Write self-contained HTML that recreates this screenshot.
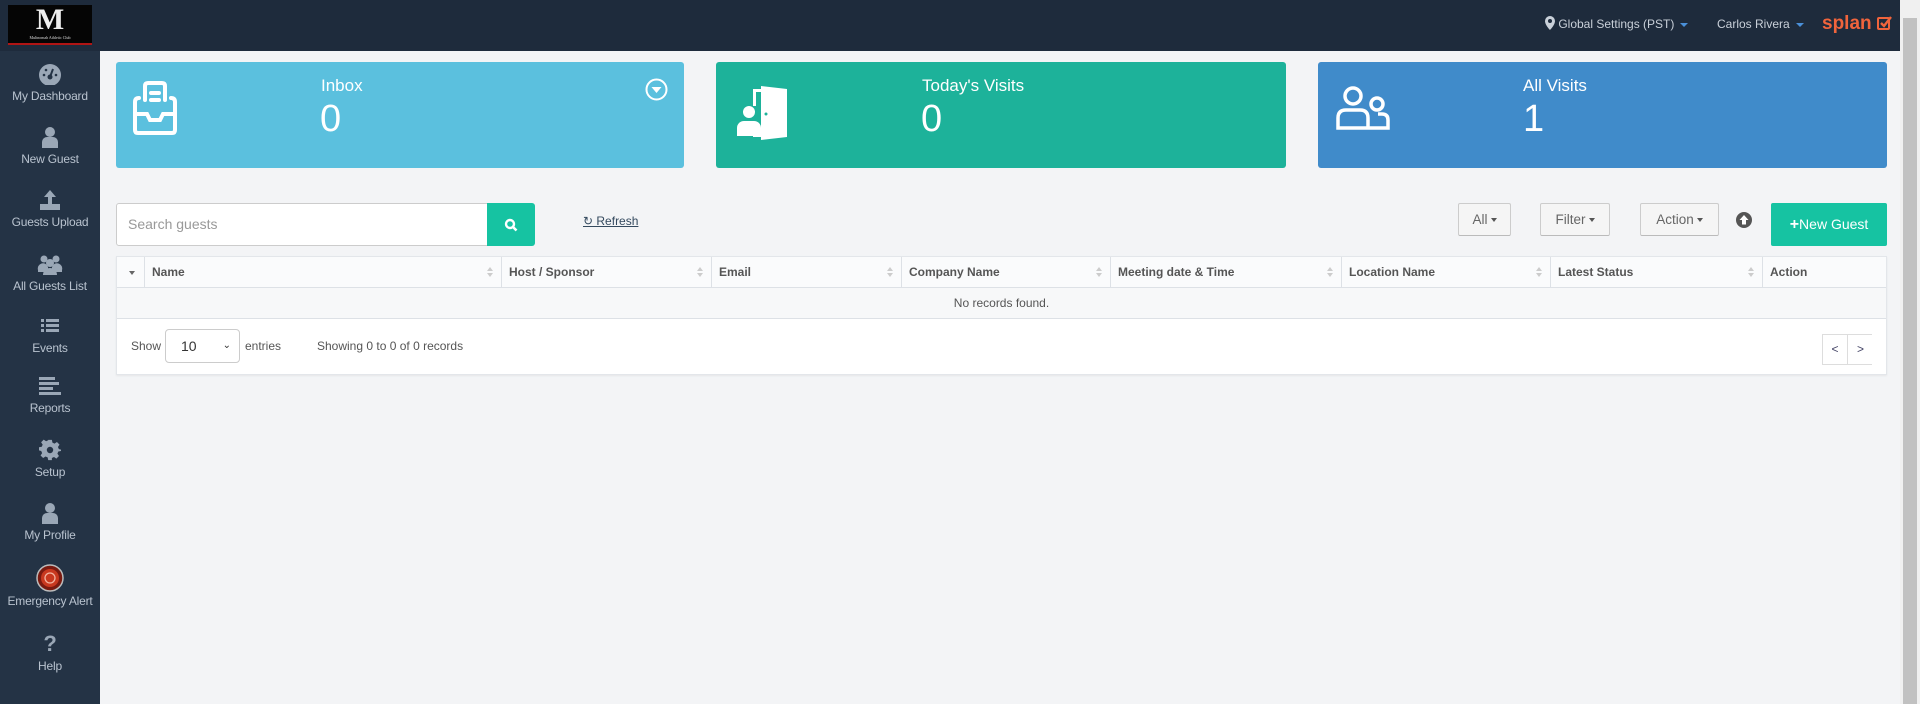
<!DOCTYPE html>
<html><head><meta charset="utf-8"><style>
*{box-sizing:border-box;margin:0;padding:0}
body{width:1920px;height:704px;overflow:hidden;background:#f3f4f6;font-family:"Liberation Sans",sans-serif;position:relative;color:#555}
.top{position:absolute;left:0;top:0;width:1900px;height:51px;background:#1e2b3c}
.logo{position:absolute;left:8px;top:5px;width:84px;height:40px;background:#050505;border-bottom:2px solid #b01515;color:#ddd;text-align:center;font-family:"Liberation Serif",serif}
.side{position:absolute;left:0;top:51px;width:100px;height:653px;background:#243345}
.si{position:absolute;left:0;width:100px;text-align:center;color:#b9c3cf;font-size:12px;letter-spacing:-0.2px}
.si .ic{display:block;margin:0 auto 4px;height:22px}
.tr{position:absolute;top:0;height:51px;line-height:49px;color:#c9d0d9;font-size:12px}
.car{display:inline-block;width:0;height:0;border-left:4px solid transparent;border-right:4px solid transparent;border-top:4px solid #4a90d9;vertical-align:middle;margin-left:6px}
.card{position:absolute;top:62px;height:106px;border-radius:3px;color:#fff}
.card .t{position:absolute;top:14px;font-size:17px}
.card .n{position:absolute;top:36px;font-size:38px}
.scroll{position:absolute;right:0;top:0;width:20px;height:704px;background:#f0f0f0}
.thumb{position:absolute;right:3px;top:18px;width:14px;height:686px;background:#c1c1c1}
.btn{position:absolute;top:203px;height:33px;border:1px solid #ccc;border-bottom-color:#bbb;background:#f5f5f5;font-size:13.5px;color:#666;line-height:31px;text-align:center;border-radius:2px}
.dc{display:inline-block;border-left:3.5px solid transparent;border-right:3.5px solid transparent;border-top:4px solid #555;vertical-align:middle;margin-left:3px}
.tbl{position:absolute;left:116px;top:256px;width:1771px;height:119px;background:#fff;border:1px solid #e3e6ea;box-shadow:0 1px 2px rgba(0,0,0,.06)}
.th{position:absolute;top:0;height:31px;border-left:1px solid #dde1e6;font-size:12px;font-weight:bold;color:#555;line-height:31px;padding-left:7px;background:#fafbfc;border-bottom:1px solid #dde1e6}
.th .s{position:absolute;right:8px;top:10px;width:0;height:0;border-left:3px solid transparent;border-right:3px solid transparent;border-bottom:4px solid #ccc}
.th .s:after{content:"";position:absolute;left:-3px;top:6px;border-left:3px solid transparent;border-right:3px solid transparent;border-top:4px solid #ccc}
</style></head><body>
<div class="top"></div>
<div class="logo"><div style="font-size:30px;line-height:30px;font-weight:bold;color:#eee">M</div><div style="font-size:4px">Multnomah Athletic Club</div></div>
<div class="tr" style="left:1545px"><svg width="10" height="14" viewBox="0 0 10 14" style="vertical-align:-2px"><path d="M5 0a5 5 0 0 0-5 5c0 4 5 9 5 9s5-5 5-9a5 5 0 0 0-5-5zm0 7a2 2 0 1 1 0-4 2 2 0 0 1 0 4z" fill="#c9d0d9"/></svg> Global Settings (PST)<span class="car"></span></div>
<div class="tr" style="left:1717px">Carlos Rivera<span class="car"></span></div>
<div class="tr" style="left:1822px;color:#f0643c;font-size:19px;font-weight:bold;line-height:47px">splan <svg width="15" height="15" viewBox="0 0 15 15" style="vertical-align:-1px"><rect x="1" y="3" width="11" height="11" rx="1" fill="none" stroke="#f0643c" stroke-width="2"/><path d="M4 8l3 3 7-9" fill="none" stroke="#f0643c" stroke-width="2.4"/></svg></div>
<div class="scroll"><div class="thumb"></div></div>

<div class="side">
<div class="si" style="top:12px"><svg class="ic" width="24" height="22" viewBox="0 0 24 22"><circle cx="12" cy="12" r="11" fill="#9aa7b6"/><circle cx="12" cy="14" r="2.5" fill="#243345"/><path d="M12 14l3-8" stroke="#243345" stroke-width="2"/><circle cx="6" cy="12" r="1.3" fill="#243345"/><circle cx="18" cy="12" r="1.3" fill="#243345"/><circle cx="8" cy="7" r="1.3" fill="#243345"/></svg>My Dashboard</div>
<div class="si" style="top:75px"><svg class="ic" width="18" height="22" viewBox="0 0 18 22"><circle cx="9" cy="6" r="5" fill="#9aa7b6"/><path d="M1 22v-6a5 5 0 0 1 5-5h6a5 5 0 0 1 5 5v6z" fill="#9aa7b6"/></svg>New Guest</div>
<div class="si" style="top:138px"><svg class="ic" width="22" height="22" viewBox="0 0 22 22"><path d="M11 1l6 7h-4v7h-4v-7h-4z" fill="#9aa7b6"/><rect x="1" y="15" width="20" height="6" fill="#9aa7b6"/></svg>Guests Upload</div>
<div class="si" style="top:202px"><svg class="ic" width="26" height="22" viewBox="0 0 26 22"><circle cx="7" cy="6" r="3.5" fill="#9aa7b6"/><circle cx="19" cy="6" r="3.5" fill="#9aa7b6"/><circle cx="13" cy="10" r="4" fill="#9aa7b6"/><path d="M1 17a5 5 0 0 1 10-3v5H1zM15 14a5 5 0 0 1 10 3v2H15zM6 22a7 7 0 0 1 14 0z" fill="#9aa7b6"/></svg>All Guests List</div>
<div class="si" style="top:264px"><svg class="ic" width="18" height="18" viewBox="0 0 18 18"><path d="M0 2h3v3H0zM5 2h13v3H5zM0 7h3v3H0zM5 7h13v3H5zM0 12h3v3H0zM5 12h13v3H5z" fill="#9aa7b6"/></svg>Events</div>
<div class="si" style="top:324px"><svg class="ic" width="22" height="20" viewBox="0 0 22 20"><path d="M0 1h16v3H0zM0 6h20v3H0zM0 11h14v3H0zM0 16h22v3H0z" fill="#9aa7b6"/></svg>Reports</div>
<div class="si" style="top:388px"><svg class="ic" width="22" height="22" viewBox="0 0 22 22"><path d="M9 1h4l.6 3 2.3 1 2.6-1.7 2.8 2.8L19.6 8.7l1 2.3L23 11.6v-1.2 .6h0V13l-3 .6-1 2.3 1.7 2.6-2.8 2.8-2.6-1.7-2.3 1L13 23H9l-.6-3-2.3-1-2.6 1.7-2.8-2.8L2.4 15.3l-1-2.3L-1 12.4V9l3-.6 1-2.3L1.3 3.5 4.1.7 6.7 2.4 9 1.4z" fill="#9aa7b6" transform="scale(.92) translate(1,0)"/><circle cx="11" cy="11" r="3.2" fill="#243345"/></svg>Setup</div>
<div class="si" style="top:451px"><svg class="ic" width="18" height="22" viewBox="0 0 18 22"><circle cx="9" cy="6" r="5" fill="#9aa7b6"/><path d="M1 22v-6a5 5 0 0 1 5-5h6a5 5 0 0 1 5 5v6z" fill="#9aa7b6"/></svg>My Profile</div>
<div class="si" style="top:513px"><svg class="ic" width="28" height="28" viewBox="0 0 28 28" style="height:28px;margin-bottom:2px"><circle cx="14" cy="14" r="13" fill="#7a1a10" stroke="#bbb" stroke-width="1.5"/><circle cx="14" cy="14" r="9" fill="#c8381f"/><circle cx="14" cy="14" r="5" fill="none" stroke="#f3b3a0" stroke-width="1.3"/></svg>Emergency Alert</div>
<div class="si" style="top:582px"><div class="ic" style="font-size:22px;font-weight:bold;line-height:22px;color:#9aa7b6">?</div>Help</div>
</div>

<div class="card" style="left:116px;width:568px;background:#5bc0de">
<svg style="position:absolute;left:17px;top:18px" width="44" height="56" viewBox="0 0 44 56" fill="none" stroke="#fff" stroke-width="4" stroke-linecap="round"><path d="M12 20V6q0-3 3-3h14q3 0 3 3v14"/><path d="M18 13h8M18 20h8"/><path d="M6 18q-4 0-4 4v28q0 3 3 3h34q3 0 3-3V22q0-4-4-4"/><path d="M2 34h12l3 6h10l3-6h12"/></svg>
<div class="t" style="left:205px">Inbox</div><div class="n" style="left:204px">0</div>
<svg style="position:absolute;left:529px;top:16px" width="23" height="23" viewBox="0 0 23 23"><circle cx="11.5" cy="11.5" r="10" fill="none" stroke="#fff" stroke-width="2"/><path d="M6.5 9h10l-5 6z" fill="#fff"/></svg>
</div>
<div class="card" style="left:716px;width:570px;background:#1db29a">
<svg style="position:absolute;left:21px;top:22px" width="52" height="56" viewBox="0 0 52 56" fill="#fff"><path d="M24 2l26 3v48l-26 3z"/><path d="M16 5h8v3h-5v14h-3zM16 40h3v10h5v3h-8z" /><circle cx="12" cy="28" r="6"/><path d="M0 52v-8a7 7 0 0 1 7-7h10a7 7 0 0 1 7 7v8z"/><circle cx="29" cy="30" r="1.5" fill="#1db29a"/></svg>
<div class="t" style="left:206px">Today's Visits</div><div class="n" style="left:205px">0</div>
</div>
<div class="card" style="left:1318px;width:569px;background:#408bca">
<svg style="position:absolute;left:17px;top:22px" width="56" height="46" viewBox="0 0 56 46" fill="none" stroke="#fff" stroke-width="3.5"><circle cx="18" cy="12" r="8"/><path d="M3 44V34q0-8 8-8h14q8 0 8 8v10zM33 44h20V36q0-6-6-6h-4"/><circle cx="42" cy="20" r="6"/></svg>
<div class="t" style="left:205px">All Visits</div><div class="n" style="left:205px">1</div>
</div>

<div style="position:absolute;left:116px;top:203px;width:372px;height:43px;background:#fff;border:1px solid #ccc;border-radius:3px 0 0 3px;font-size:14px;color:#999;line-height:41px;padding-left:11px">Search guests</div>
<div style="position:absolute;left:487px;top:203px;width:48px;height:43px;background:#16c3a2;border-radius:0 3px 3px 0"><svg style="position:absolute;left:17px;top:15px" width="14" height="14" viewBox="0 0 14 14"><circle cx="6" cy="6" r="4" fill="none" stroke="#fff" stroke-width="2.4"/><path d="M9 9l3.5 3.5" stroke="#fff" stroke-width="2.6"/></svg></div>
<div style="position:absolute;left:583px;top:214px;font-size:12px;color:#34495e;text-decoration:underline">&#8635; Refresh</div>

<div class="btn" style="left:1458px;width:53px">All<span class="dc"></span></div>
<div class="btn" style="left:1540px;width:70px">Filter<span class="dc"></span></div>
<div class="btn" style="left:1640px;width:79px">Action<span class="dc"></span></div>
<svg style="position:absolute;left:1736px;top:212px" width="16" height="16" viewBox="0 0 16 16"><circle cx="8" cy="8" r="8" fill="#555"/><path d="M8 3l4.5 5H10v4.5H6V8H3.5z" fill="#fff"/></svg>
<div style="position:absolute;left:1771px;top:203px;width:116px;height:43px;background:#16c3a2;color:#fff;font-size:14px;line-height:43px;text-align:center;border-radius:2px"><b style="font-size:16px">+</b>New Guest</div>

<div class="tbl">
<div class="th" style="left:0;width:27px;border-left:0;padding-left:9px"><span class="dc" style="border-top-color:#666"></span></div>
<div class="th" style="left:27px;width:357px">Name<span class="s"></span></div>
<div class="th" style="left:384px;width:210px">Host / Sponsor<span class="s"></span></div>
<div class="th" style="left:594px;width:190px">Email<span class="s"></span></div>
<div class="th" style="left:784px;width:209px">Company Name<span class="s"></span></div>
<div class="th" style="left:993px;width:231px">Meeting date &amp; Time<span class="s"></span></div>
<div class="th" style="left:1224px;width:209px">Location Name<span class="s"></span></div>
<div class="th" style="left:1433px;width:212px">Latest Status<span class="s"></span></div>
<div class="th" style="left:1645px;width:124px">Action</div>
<div style="position:absolute;left:0;top:31px;width:1769px;height:31px;background:#f7f8f9;border-bottom:1px solid #dde1e6;text-align:center;font-size:12px;line-height:30px;color:#555">No records found.</div>
<div style="position:absolute;left:14px;top:82px;font-size:12px;color:#555">Show</div>
<div style="position:absolute;left:48px;top:72px;width:75px;height:34px;border:1px solid #ccc;border-radius:4px;font-size:14px;line-height:32px;padding-left:15px;color:#333">10<span style="position:absolute;right:8px;top:0;font-size:10px">&#8964;</span></div>
<div style="position:absolute;left:128px;top:82px;font-size:12px">entries</div>
<div style="position:absolute;left:200px;top:82px;font-size:12px">Showing 0 to 0 of 0 records</div>
<div style="position:absolute;left:1705px;top:77px;width:50px;height:31px;border:1px solid #ddd;border-right:0;font-size:12px;color:#446"><span style="position:absolute;left:0;width:25px;text-align:center;line-height:29px;border-right:1px solid #ddd">&lt;</span><span style="position:absolute;left:25px;width:25px;text-align:center;line-height:29px">&gt;</span></div>
</div>
</body></html>
